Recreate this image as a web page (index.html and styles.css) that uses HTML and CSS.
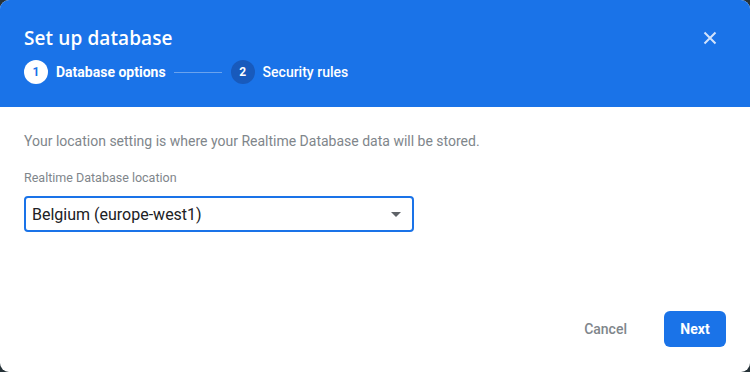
FILE: index.html
```html
<!DOCTYPE html>
<html>
<head>
<meta charset="utf-8">
<link rel="stylesheet" href="styles.css">
</head>
<body>
<div class="dialog">
  <div class="header">
    <div class="title-row">
      <h1 class="title">Set up database</h1>
      <button class="close" aria-label="Close">
        <svg width="14" height="14" viewBox="0 0 14 14"><path d="M1.5 1.5L12.5 12.5M12.5 1.5L1.5 12.5" stroke="#d2e3fc" stroke-width="2" fill="none"/></svg>
      </button>
    </div>
    <div class="steps">
      <div class="step active"><span class="num">1</span><span class="label">Database options</span></div>
      <div class="line"></div>
      <div class="step"><span class="num">2</span><span class="label">Security rules</span></div>
    </div>
  </div>
  <div class="content">
    <p class="desc">Your location setting is where your Realtime Database data will be stored.</p>
    <div class="field-label">Realtime Database location</div>
    <div class="select">
      <span class="value">Belgium (europe-west1)</span>
      <span class="arrow"></span>
    </div>
  </div>
  <div class="footer">
    <button class="btn cancel">Cancel</button>
    <button class="btn next">Next</button>
  </div>
</div>
</body>
</html>
```
FILE: styles.css
```css
html, body {
  margin: 0;
  padding: 0;
  background: #263238;
  width: 750px;
  height: 372px;
  overflow: hidden;
}
.dialog {
  width: 750px;
  height: 372px;
  background: #fff;
  border-radius: 9px;
  overflow: hidden;
  display: flex;
  flex-direction: column;
  font-family: Roboto, "Liberation Sans", sans-serif;
}
.header {
  background: #1a73e8;
  height: 107px;
  box-sizing: border-box;
  padding: 24px 24px 0 24px;
}
.title-row {
  display: flex;
  justify-content: space-between;
  align-items: center;
  height: 28px;
}
.title {
  margin: 0;
  font-family: "Open Sans", Roboto, sans-serif;
  font-weight: 600;
  font-size: 19px;
  color: #fff;
  letter-spacing: 0.1px;
  line-height: 28px;
}
.close {
  background: none;
  border: 0;
  padding: 0;
  margin-right: 9px;
  width: 14px;
  height: 14px;
  display: flex;
}
.steps {
  display: flex;
  align-items: center;
  margin-top: 8px;
  height: 24px;
}
.step {
  display: flex;
  align-items: center;
  gap: 8px;
}
.num {
  width: 24px;
  height: 24px;
  border-radius: 50%;
  background: #185abc;
  color: #fff;
  font-size: 12px;
  font-weight: 700;
  display: flex;
  align-items: center;
  justify-content: center;
}
.step.active .num {
  background: #fff;
  color: #1a73e8;
}
.label {
  color: #fff;
  font-size: 14px;
  font-weight: 500;
}
.step.active .label {
  font-weight: 700;
}
.line {
  width: 48px;
  height: 1px;
  background: #6aa3ee;
  margin: 0 9px 0 8px;
}
.content {
  padding: 24px 24px 0 24px;
}
.desc {
  margin: 0;
  font-size: 14px;
  line-height: 20px;
  color: #80868b;
}
.field-label {
  margin-top: 18px;
  font-size: 12.5px;
  line-height: 17px;
  color: #80868b;
}
.select {
  margin-top: 10px;
  width: 390px;
  height: 36px;
  box-sizing: border-box;
  border: 2px solid #1a73e8;
  border-radius: 4px;
  display: flex;
  align-items: center;
  justify-content: space-between;
  padding: 0 11px 0 6px;
}
.value {
  font-size: 16px;
  color: #202124;
}
.arrow {
  width: 0;
  height: 0;
  border-left: 5px solid transparent;
  border-right: 5px solid transparent;
  border-top: 5px solid #5f6368;
}
.footer {
  margin-top: auto;
  display: flex;
  justify-content: flex-end;
  align-items: center;
  gap: 16px;
  padding: 0 24px 25px 0;
}
.btn {
  height: 36px;
  border: 0;
  font-family: Roboto, "Liberation Sans", sans-serif;
  font-size: 14px;
  border-radius: 6px;
  padding: 0 16px;
  cursor: pointer;
}
.cancel {
  background: none;
  color: #80868b;
  font-weight: 500;
  padding: 0 21px 0 20px;
}
.next {
  background: #1a73e8;
  color: #fff;
  font-weight: 700;
  width: 62px;
  padding: 0;
}
```
